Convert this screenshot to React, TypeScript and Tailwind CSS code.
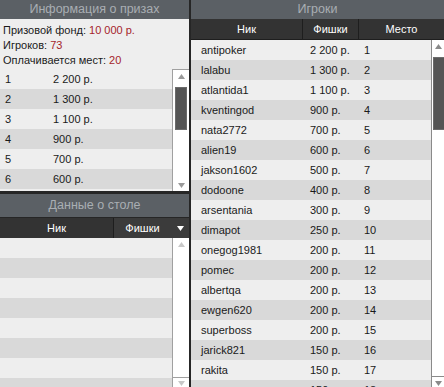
import React from "react";

const prizes = [
  ["1", "2 200 р."],
  ["2", "1 300 р."],
  ["3", "1 100 р."],
  ["4", "900 р."],
  ["5", "700 р."],
  ["6", "600 р."],
];

const players: [string, string, string][] = [
  ["antipoker", "2 200 р.", "1"],
  ["lalabu", "1 300 р.", "2"],
  ["atlantida1", "1 100 р.", "3"],
  ["kventingod", "900 р.", "4"],
  ["nata2772", "700 р.", "5"],
  ["alien19", "600 р.", "6"],
  ["jakson1602", "500 р.", "7"],
  ["dodoone", "400 р.", "8"],
  ["arsentania", "300 р.", "9"],
  ["dimapot", "250 р.", "10"],
  ["onegog1981", "200 р.", "11"],
  ["pomec", "200 р.", "12"],
  ["albertqa", "200 р.", "13"],
  ["ewgen620", "200 р.", "14"],
  ["superboss", "200 р.", "15"],
  ["jarick821", "150 р.", "16"],
  ["rakita", "150 р.", "17"],
  ["", "150 р.", "18"],
];

function Tri({ down, color = "#9a9a9a" }: { down?: boolean; color?: string }) {
  return (
    <svg width="7" height="5" viewBox="0 0 7 5">
      {down ? (
        <polygon points="0,0 7,0 3.5,5" fill={color} />
      ) : (
        <polygon points="0,5 7,5 3.5,0" fill={color} />
      )}
    </svg>
  );
}

function Header({ title, h }: { title: string; h: string }) {
  return (
    <div
      className={`${h} bg-[#5b6065] text-[#a9aeb3] text-[12.5px] flex items-center justify-center shrink-0`}
    >
      {title}
    </div>
  );
}

export default function App() {
  return (
    <div className="w-[444px] h-[387px] overflow-hidden flex bg-[#262626] font-['Liberation_Sans',Arial,sans-serif] text-[11px] text-[#1a1a1a]">
      {/* Left column */}
      <div className="w-[189px] shrink-0 flex flex-col">
        <div className="h-[19px] bg-[#5b6065] text-[#a9aeb3] text-[12.5px] flex items-center justify-center shrink-0">
          Информация о призах
        </div>
        <div className="h-[50px] bg-[#eeeeee] pt-[4px] pl-[3px] leading-[15px] shrink-0">
          <div>
            Призовой фонд: <span className="text-[#a51e2b]">10 000 р.</span>
          </div>
          <div>
            Игроков: <span className="text-[#a51e2b]">73</span>
          </div>
          <div>
            Оплачивается мест: <span className="text-[#a51e2b]">20</span>
          </div>
        </div>
        <div className="h-[122px] flex shrink-0 bg-[#eeeeee]">
          <div className="w-[172px] flex flex-col">
            {prizes.map((p, i) => (
              <div
                key={i}
                className={`h-[20px] flex items-center shrink-0 ${
                  i % 2 === 0 ? "bg-[#eeeeee]" : "bg-[#d9d9d9]"
                }`}
              >
                <span className="w-[53px] pl-[5px]">{p[0]}</span>
                <span>{p[1]}</span>
              </div>
            ))}
          </div>
          <div className="w-[17px] bg-white border-l border-t border-[#a0a0a0] flex flex-col items-center relative">
            <div className="h-[13px] flex items-center justify-center">
              <Tri />
            </div>
            <div className="absolute left-[2px] top-[17px] w-[12px] h-[43px] bg-[#555555] border border-[#6b6b6b]" />
            <div className="mt-auto h-[12px] flex items-center justify-center">
              <Tri down />
            </div>
          </div>
        </div>
        <div className="h-[3px] shrink-0" />
        <Header title="Данные о столе" h="h-[23px]" />
        <div className="h-[1px] shrink-0" />
        <div className="h-[20px] shrink-0 flex text-white">
          <div className="w-[114px] bg-[#333333] flex items-center justify-center border-r border-[#1e1e1e]">
            Ник
          </div>
          <div className="flex-1 bg-[#3b3b3b] flex items-center">
            <span className="w-[57px] text-center">Фишки</span>
            <span className="flex-1 flex justify-center">
              <Tri down color="#ffffff" />
            </span>
          </div>
        </div>
        <div className="flex-1 flex min-h-0">
          <div className="w-[172px] flex flex-col overflow-hidden">
            {Array.from({ length: 8 }).map((_, i) => (
              <div
                key={i}
                className={`h-[20px] shrink-0 ${
                  i % 2 === 0 ? "bg-[#eeeeee]" : "bg-[#d9d9d9]"
                }`}
              />
            ))}
          </div>
          <div className="w-[17px] h-[151px] bg-white border-l border-[#a0a0a0] flex flex-col">
            <div className="h-[12px] flex items-center justify-center">
              <Tri color="#c8c8c8" />
            </div>
            <div className="mt-auto h-[12px] border-t border-[#a0a0a0] flex items-center justify-center">
              <Tri down color="#c8c8c8" />
            </div>
          </div>
        </div>
      </div>

      {/* Right column */}
      <div className="ml-[2px] w-[253px] shrink-0 flex flex-col overflow-hidden">
        <div className="h-[19px] bg-[#5b6065] text-[#a9aeb3] text-[12.5px] flex items-center justify-center shrink-0">
          Игроки
        </div>
        <div className="h-[21px] shrink-0 flex bg-[#333333] text-white border-b border-[#1e1e1e]">
          <div className="w-[112px] flex items-center justify-center border-r border-[#1e1e1e]">
            Ник
          </div>
          <div className="w-[56px] flex items-center justify-center border-r border-[#1e1e1e]">
            Фишки
          </div>
          <div className="flex-1 flex items-center justify-center">Место</div>
        </div>
        <div className="flex-1 flex min-h-0">
          <div className="w-[240px] shrink-0 flex flex-col overflow-hidden">
            {players.map((p, i) => (
              <div
                key={i}
                className={`h-[20px] shrink-0 flex items-center ${
                  i % 2 === 0 ? "bg-[#eeeeee]" : "bg-[#d9d9d9]"
                }`}
              >
                <span className="w-[112px] pl-[10px]">{p[0]}</span>
                <span className="w-[56px] pl-[7px]">{p[1]}</span>
                <span className="pl-[5px]">{p[2]}</span>
              </div>
            ))}
          </div>
          <div className="w-[17px] h-[349px] shrink-0 bg-white border-l border-[#8a8a8a] flex flex-col relative">
            <div className="h-[13px] w-[13px] flex items-center justify-center">
              <Tri color="#8a8a8a" />
            </div>
            <div className="absolute left-[1px] top-[17px] w-[14px] h-[73px] bg-[#555555] border border-[#6b6b6b]" />
            <div className="mt-auto h-[13px] border-t border-[#8a8a8a] flex items-center pl-[3px]">
              <Tri down color="#8a8a8a" />
            </div>
          </div>
        </div>
      </div>
    </div>
  );
}
